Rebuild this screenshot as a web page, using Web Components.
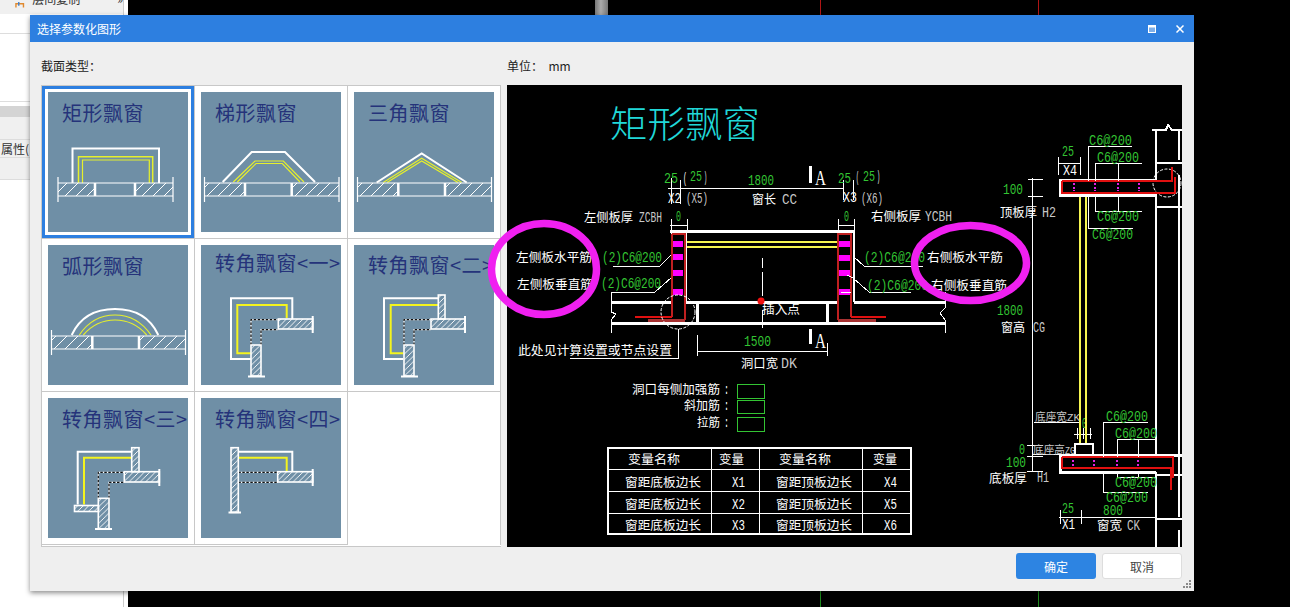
<!DOCTYPE html>
<html lang="zh">
<head>
<meta charset="utf-8">
<title>选择参数化图形</title>
<style>
  html, body { margin: 0; height: 100%; overflow: hidden; background: #000; }
  body { font-family: "Noto Sans CJK SC", "Liberation Sans", sans-serif; font-size: 12px; }
</style>
</head>
<body>
<app-shell></app-shell>
<param-dialog heading="选择参数化图形">
  <type-grid slot="types">
    <section-tile shape="rect" selected>矩形飘窗</section-tile>
    <section-tile shape="trapezoid">梯形飘窗</section-tile>
    <section-tile shape="triangle">三角飘窗</section-tile>
    <section-tile shape="arc">弧形飘窗</section-tile>
    <section-tile shape="corner1" style="--label-top:4px">转角飘窗&lt;一&gt;</section-tile>
    <section-tile shape="corner2" style="--label-top:6px">转角飘窗&lt;二&gt;</section-tile>
    <section-tile shape="corner3">转角飘窗&lt;三&gt;</section-tile>
    <section-tile shape="corner4">转角飘窗&lt;四&gt;</section-tile>
    <section-tile></section-tile>
  </type-grid>
  <cad-drawing slot="preview"></cad-drawing>
</param-dialog>

<script>
class AppShell extends HTMLElement {
  constructor () {
    super()
    this.attachShadow({ mode: 'open' }).innerHTML = /* html */`
      <style>
        :host { display: flex; height: 100vh; color: #333; }
        .side { width: 128px; flex: none; background: #fff; display: flex; flex-direction: column; position: relative; }
        .side::after { content: ''; position: absolute; left: 123px; top: 0; bottom: 0; width: 1px; background: #ccc; }
        .tools { height: 14px; background: #f0f0f0; display: flex; align-items: flex-end; padding: 0 0 6px 15px; gap: 5px; width: 108px; box-sizing: border-box; width: 123px; }
        .tools span { line-height: 18px; white-space: nowrap; }
        .tools b { margin-left: 32px; font-weight: 400; line-height: 18px; }
        .tools svg { margin-bottom: 0; }
        .rule1 { margin-top: 19px; height: 1px; background: #ddd; }
        .rule2 { margin-top: 67px; height: 1px; background: #ddd; }
        .grey { margin-top: 4px; height: 11px; background: #d4d4d4; }
        .props { height: 63px; background: #f0f0f0; padding-top: 22px; border-bottom: 1px solid #ddd; box-sizing: border-box; }
        .props span { display: block; border-top: 1px solid #ddd; border-bottom: 1px solid #ddd; line-height: 17px; padding-left: 1px; }
        .canvas { flex: 1; background: #000; position: relative; }
        .canvas i { position: absolute; width: 1px; }
        .red { top: 0; height: 15px; background: #b01515; }
        .green { top: 591px; height: 16px; background: #1d8a1d; }
        .handle { position: absolute; left: 467px; top: 0; width: 13px; height: 15px; background: linear-gradient(90deg, #777, #aaa 45%, #777); }
      </style>
      <div class="side">
        <div class="tools">
          <svg width="13" height="14" viewBox="0 0 13 14"><path d="M1 14V10H9V14" fill="none" stroke="#e08a30" stroke-width="1.5"/><path d="M4 8V12" stroke="#3a7fd0" stroke-width="1.5"/></svg>
          <span>层间复制</span><b>»</b>
        </div>
        <div class="rule1"></div>
        <div class="rule2"></div>
        <div class="grey"></div>
        <div class="props"><span>属性(</span></div>
      </div>
      <div class="canvas">
        <div class="handle"></div>
        <i class="red" style="left:692px"></i>
        <i class="red" style="left:910px"></i>
        <i class="green" style="left:692px"></i>
        <i class="green" style="left:910px"></i>
      </div>
    `
  }
}

class ParamDialog extends HTMLElement {
  constructor () {
    super()
    this.attachShadow({ mode: 'open' }).innerHTML = /* html */`
      <style>
        :host {
          position: absolute; left: 30px; top: 15px; width: 1164px; height: 576px;
          display: flex; flex-direction: column; background: #efefef; color: #222;
          box-shadow: 0 2px 5px rgba(0, 0, 0, .45);
        }
        header { height: 27px; flex: none; background: #2d7fe0; color: #fff; display: flex; align-items: center; padding: 0 10px 0 7px; }
        header span { flex: 1; }
        header svg { display: block; }
        header svg + svg { margin-left: 20px; }
        .main { flex: 1; display: grid; grid-template-columns: 460px 675px; grid-template-rows: 43px 462px; column-gap: 6px; padding: 0 12px 0 11px; }
        .label { align-self: end; padding-bottom: 11px; line-height: 16px; }
        .label i { font-style: normal; font-family: "Noto Sans CJK TC", sans-serif; }
        footer { height: 44px; flex: none; display: flex; justify-content: flex-end; gap: 6px; padding: 6px 12px 0 0; box-sizing: border-box; }
        button { width: 80px; height: 26px; font: inherit; border-radius: 3px; padding: 0; }
        .ok { background: #2d84e2; color: #fff; border: 0; }
        .cancel { background: #fff; color: #444; border: 1px solid #ddd; }
        .grip { position: absolute; right: 3px; bottom: 3px; }
      </style>
      <header>
        <span></span>
        <svg width="8" height="8" viewBox="0 0 8 8"><rect x=".5" y=".5" width="7" height="7" fill="#7fb0ea" stroke="#fff"/><path d="M0 1.5H8" stroke="#fff" stroke-width="2"/></svg>
        <svg width="8" height="8" viewBox="0 0 8 8"><path d="M.5 .5L7.5 7.5M7.5 .5L.5 7.5" stroke="#fff" stroke-width="1.5"/></svg>
      </header>
      <div class="main">
        <div class="label">截面类型<i>：</i></div>
        <div class="label">单位<i>：</i>&nbsp; mm</div>
        <slot name="types"></slot>
        <slot name="preview"></slot>
      </div>
      <footer>
        <button class="ok">确定</button>
        <button class="cancel">取消</button>
      </footer>
      <svg class="grip" width="8" height="8" viewBox="0 0 8 8" fill="#8a8a8a">
        <rect x="6" y="0" width="2" height="2"/><rect x="3" y="3" width="2" height="2"/><rect x="6" y="3" width="2" height="2"/>
        <rect x="0" y="6" width="2" height="2"/><rect x="3" y="6" width="2" height="2"/><rect x="6" y="6" width="2" height="2"/>
      </svg>
    `
    this.shadowRoot.querySelector('header span').textContent = this.getAttribute('heading')
  }
}

class TypeGrid extends HTMLElement {
  constructor () {
    super()
    this.attachShadow({ mode: 'open' }).innerHTML = /* html */`
      <style>
        :host {
          display: grid; grid-template-columns: repeat(3, 153px); grid-auto-rows: 153px;
          box-sizing: border-box; height: 462px; background: #fff; border: 1px solid #c8c8c8; border-right: 0;
        }
      </style>
      <slot></slot>
    `
  }
}

// thumbnail drawing helpers, coordinates are inside the 140x140 picture
const straightWall = (l, r, ol, or, top = 91, bot = 104) => `
  <rect x="${l}" y="${top}" width="${ol - l}" height="${bot - top}" fill="url(#wide)"/>
  <rect x="${or}" y="${top}" width="${r - or}" height="${bot - top}" fill="url(#wide)"/>
  <path d="M${l} ${top}H${r}M${l} ${bot}H${r}M${l} ${top - 6}V${bot + 6}M${r} ${top - 6}V${bot + 6}" stroke="#fff" stroke-width="1.2" fill="none"/>
  <path d="M${ol} ${top}V${bot}M${or} ${top}V${bot}" stroke="#fff" stroke-width="2.5"/>`
const outline = d => `<path d="${d}" fill="none" stroke="#fff" stroke-width="2"/>`
const yellow = (d, w = 1.2, c = '#e6f02c') => `<path d="${d}" fill="none" stroke="${c}" stroke-width="${w}"/>`
const hatched = (x, y, w, h) => `<rect x="${x}" y="${y}" width="${w}" height="${h}" fill="url(#fine)" stroke="#fff" stroke-width="1.6"/>`
const dashed = d => `<path d="${d}" fill="none" stroke="#fff" stroke-width="1.2"/><path d="${d}" fill="none" stroke="#111" stroke-width="1.2" stroke-dasharray="2.5 1.5"/>`

const SHAPES = {
  rect: outline('M24.5 91V56.5H111V91') + yellow('M30.5 91V64.7H104.7V91', 1.5) + yellow('M34.5 91V68H101.3V91') + straightWall(10, 125, 47, 87),
  trapezoid: outline('M21.7 90L50.7 60H84L114 90') + yellow('M32.3 90L54 69H82.3L103 90') + yellow('M36.3 90L55 71.5H81.3L99 90') + straightWall(3.5, 138, 44, 90.7),
  triangle: outline('M22.7 90.5L67.7 61.5L112.7 90.5') + yellow('M29.3 90.5L67.7 66.3L107.7 90.5') + yellow('M33 90.5L67.7 69L104 90.5') + straightWall(3.5, 137.5, 44.3, 91),
  arc: outline('M23.7 90C32 72 48 64 67 64S102 72 110.3 90') + yellow('M31.3 90C40 77 52 70 67 70S94 77 103 90') + yellow('M35.3 90C43 81 54 75 67 75S91 81 98.7 90') + straightWall(3.5, 137.5, 44.3, 91),
  corner1: outline('M49.7 114H30V53.3H91.3V74') + yellow('M85.7 73V60H36.3V108.3H49.7', 2, '#f4f41e') +
    dashed('M50 100V74.7H77.3') + dashed('M60 100V84.7H77.3') + hatched(77.3, 74, 34.4, 10) + hatched(50, 100, 10, 31) +
    outline('M111.7 71V88') + outline('M47 131.5H64'),
  corner2: outline('M49.3 114H30V53.3H84.3') + yellow('M84.3 60H36.7V108.3H49.3', 2, '#f4f41e') +
    dashed('M50 100V74.7H77') + dashed('M60 100V84.7H77') + hatched(84.3, 50, 6.7, 24) + hatched(77, 74, 34, 10) + hatched(50, 100, 10, 31) +
    outline('M111 71V88') + outline('M47 131.5H64'),
  corner3: outline('M29.7 106.5V53.7H83.7') + yellow('M83.7 59.7H36V106.5', 2, '#f4f41e') +
    dashed('M50.3 100.3V74.3H76.3') + dashed('M61 100.3V84.3H76.3') + hatched(83.7, 49.7, 7.3, 24) + hatched(76.3, 73.7, 35, 10.3) +
    hatched(26.5, 107.5, 24, 6) + hatched(50.3, 100.3, 10.7, 30.7) + outline('M111.3 71V88') + outline('M47 131H64'),
  corner4: outline('M37.3 53.7H91.3V73.7') + yellow('M37.3 59.7H85.7V73', 2, '#f4f41e') +
    dashed('M37.3 74.3H76.7') + dashed('M37.3 84.3H76.7') + hatched(30, 49.7, 7.3, 64.6) + hatched(76.7, 73.7, 35, 10.3) +
    outline('M111.7 71V88') + outline('M27.5 114.5H40')
}

class SectionTile extends HTMLElement {
  constructor () {
    super()
    const shape = SHAPES[this.getAttribute('shape')]
    this.attachShadow({ mode: 'open' }).innerHTML = /* html */`
      <style>
        :host {
          display: block; box-sizing: border-box; padding: 6px; border-right: 1px solid #c8c8c8; border-bottom: 1px solid #c8c8c8;
          background: #fff; font-family: "Noto Sans CJK SC", "Liberation Sans", sans-serif;
        }
        :host([selected]) { box-shadow: inset 0 0 0 3px #2d7fe0; }
        :host(:not([shape])) { border-bottom: 0; }
        .thumb { width: 140px; height: 140px; background: #6f8fa6; position: relative; overflow: hidden; }
        .label {
          padding: var(--label-top, 7px) 0 0 14px; font-size: 20px; font-weight: 400; line-height: 28px;
          letter-spacing: .5px; color: #25337a; white-space: nowrap;
        }
        svg { position: absolute; left: 0; top: 0; }
      </style>
      ${shape ? `
      <div class="thumb">
        <div class="label"><slot></slot></div>
        <svg width="140" height="140" viewBox="0 0 140 140">
          <defs>
            <pattern id="wide" patternUnits="userSpaceOnUse" width="11" height="11"><path d="M0 11L11 0" stroke="#fff" stroke-width="1"/></pattern>
            <pattern id="fine" patternUnits="userSpaceOnUse" width="5.5" height="5.5"><path d="M0 5.5L5.5 0" stroke="#fff" stroke-width=".9"/></pattern>
          </defs>
          ${shape}
        </svg>
      </div>` : ''}
    `
  }
}

// cad text: x1..x2 is the width the string has in the drawing
const T = (x1, x2, y, s, c = 'w', size) => {
  const cjk = /[\u4e00-\u9fff]/.test(s)
  const fs = size || (cjk ? 12.5 : 14)
  return `<text x="${x1}" y="${y}" textLength="${x2 - x1}" lengthAdjust="spacingAndGlyphs" font-size="${fs}" class="${c} ${cjk ? 'cjk' : 'lat'}">${s}</text>`
}
const P = (d, c = 't') => `<path class="${c}" d="${d}"/>`

class CadDrawing extends HTMLElement {
  constructor () {
    super()
    this.attachShadow({ mode: 'open' }).innerHTML = /* html */`
      <style>
        :host { display: block; background: #000; width: 675px; height: 462px; position: relative; }
        svg { display: block; overflow: visible; }
        path, rect, circle { fill: none; }
        .t { stroke: #fff; stroke-width: 1; shape-rendering: crispEdges; }
        .m { stroke: #fff; stroke-width: 2; shape-rendering: crispEdges; }
        .k { stroke: #fff; stroke-width: 3; shape-rendering: crispEdges; }
        .c { stroke: #fff; stroke-width: 1; stroke-dasharray: 3 1.5; }
        .r { stroke: #e01010; stroke-width: 2; shape-rendering: crispEdges; }
        .d { stroke: #c02020; stroke-width: 2; shape-rendering: crispEdges; }
        .o { stroke: #a83232; stroke-width: 3; shape-rendering: crispEdges; }
        .y { stroke: #f6f650; stroke-width: 2; shape-rendering: crispEdges; }
        .p { stroke: #ff00ff; stroke-width: 6; shape-rendering: crispEdges; }
        .q { stroke: #e020e0; stroke-width: 1.5; stroke-dasharray: 2 1.5; shape-rendering: crispEdges; }
        .b { stroke: #33c433; stroke-width: 1; shape-rendering: crispEdges; }
        .e { stroke: #f020f0; stroke-width: 7.5; }
        text { white-space: pre; }
        .cjk { font-family: "Noto Sans CJK SC", sans-serif; font-weight: 400; }
        .lat { font-family: "Liberation Mono", monospace; }
        .serif { font-family: "Liberation Serif", serif; }
        .w { fill: #fff; }
        .s { fill: #c8c8c8; }
        .g { fill: #33c433; }
        .h { fill: #20d8d8; font-weight: 300; }
      </style>
      <svg width="675" height="462" viewBox="507 85 675 462">
        ${T(610, 760, 138, '矩形飘窗', 'h', 37)}

        <!-- front view: dimensions -->
        ${P('M668 188H843M671 178V204M680 180V204M843 180V200M853 180V200')}
        ${P('M670 225H688M671 219V231M687 219V231M838 225H855M838 219V231M854 219V231')}
        ${T(664, 678, 183, '25', 'g')}${T(683, 687, 183, '(', 'w')}${T(690, 702, 181, '25', 'g')}${T(704, 707, 182, ')', 'w')}
        ${T(748, 774, 185, '1800', 'g')}
        ${T(668, 681, 203, 'X2')}${T(686, 708, 203, '(X5)', 's')}
        ${T(752, 776, 204, '窗长')}${T(782, 797, 204, 'CC', 's')}
        ${T(584, 633, 222, '左侧板厚')}${T(639, 662, 222, 'ZCBH', 's')}
        ${T(676, 681, 221, '0', 'g')}
        ${T(838, 851, 183, '25', 'g')}${T(856, 859, 182, '(', 'w')}${T(863, 875, 181, '25', 'g')}${T(877, 880, 181, ')', 'w')}
        ${T(843, 857, 202, 'X3')}${T(861, 883, 203, '(X6)', 's')}
        ${T(844, 849, 221, '0', 'g')}
        ${T(871, 921, 221, '右侧板厚')}${T(925, 952, 221, 'YCBH', 's')}

        <!-- section marks -->
        <rect x="809" y="166" width="3" height="17" style="fill:#fff"/>
        <rect x="809" y="329" width="3" height="15" style="fill:#fff"/>
        <text x="815" y="185" class="w serif" font-size="21" textLength="11" lengthAdjust="spacingAndGlyphs">A</text>
        <text x="815" y="348" class="w serif" font-size="21" textLength="11" lengthAdjust="spacingAndGlyphs">A</text>

        <!-- front view: window and wall -->
        ${P('M670 231H855', 'k')}
        ${P('M686 242H838M686 247H838', 'y')}
        ${P('M671 231V302')}${P('M686 231V302M854 231V302', 'm')}
        ${P('M611 302H672M686 302H838M854 302H945M611 323H945', 'k')}
        ${P('M697 302V323M827 302V323', 'k')}
        ${P('M611 292V312L616 314L611 320V333M945 292V308L940 313L945 320V333')}
        ${P('M673 244H683M673 257H683M673 273H683M673 292H683', 'p')}
        ${P('M839 244H850M839 258H850M839 273H850M839 292H850', 'p')}
        ${P('M648 320H685M838 320H876', 'o')}
        ${P('M672 234H685V320M672 317V234', 'd')}${P('M635 317H672', 'r')}
        ${P('M851 317V234H838V320', 'd')}${P('M851 317H886', 'r')}
        ${P('M762 258V268M762 272V296M762 310V328')}
        <circle cx="678" cy="312" r="17" class="c"/>
        <circle cx="761" cy="301" r="3.5" style="fill:#f01010"/>
        ${P('M678 329V358H570')}
        ${T(518, 672, 355, '此处见计算设置或节点设置', 'w', 12.5)}
        ${T(762, 800, 314, '插入点')}
        ${T(744, 771, 346, '1500', 'g')}
        ${P('M697 351H827M697 335V356M827 343V356')}
        ${T(741, 778, 368, '洞口宽')}${T(781, 797, 368, 'DK', 's')}

        <!-- front view: leaders -->
        ${P('M613 266H660L671 255M611 292H655L671 278')}
        ${P('M854 257L864 266H923M847 275L853 278L869 292H911M841 292H851')}
        ${T(516, 592, 262, '左侧板水平筋')}${T(517, 593, 289, '左侧板垂直筋')}
        ${T(602, 662, 262, '(2)C6@200', 'g')}${T(601, 661, 288, '(2)C6@200', 'g')}
        ${T(864, 925, 262, '(2)C6@200', 'g')}${T(867, 928, 290, '(2)C6@200', 'g')}
        ${T(927, 1003, 262, '右侧板水平筋')}${T(931, 1007, 290, '右侧板垂直筋')}

        <!-- bar notes -->
        ${T(632, 720, 394, '洞口每侧加强筋')}${T(724, 729, 394, ':')}
        ${T(684, 720, 410, '斜加筋')}${T(724, 729, 410, ':')}
        ${T(697, 720, 427, '拉筋')}${T(724, 729, 427, ':')}
        ${P('M737 384H764V398H737ZM737 400H764V413H737ZM737 417H764V431H737Z', 'b')}

        <!-- variable table -->
        ${P('M608 448H911V534H608Z', 'm')}
        ${P('M711 448V534M759 448V534M862 448V534M608 469H911M608 491H911M608 513H911')}
        ${T(628, 680, 464, '变量名称')}${T(719, 744, 464, '变量')}${T(779, 831, 464, '变量名称')}${T(873, 897, 464, '变量')}
        ${T(625, 701, 487, '窗距底板边长')}${T(732, 745, 487, 'X1')}${T(776, 852, 487, '窗距顶板边长')}${T(884, 897, 487, 'X4')}
        ${T(625, 701, 509, '窗距底板边长')}${T(732, 745, 509, 'X2')}${T(776, 852, 509, '窗距顶板边长')}${T(884, 897, 509, 'X5')}
        ${T(625, 701, 530, '窗距底板边长')}${T(732, 745, 530, 'X3')}${T(776, 852, 530, '窗距顶板边长')}${T(884, 897, 530, 'X6')}

        <!-- section view: dimensions -->
        ${P('M1032 178V472M1028 179H1043M1028 196H1043M1027 445H1043M1027 456H1043M1027 471H1043')}
        ${P('M1058 163H1081M1058 157V175M1080 157V175M1059 517H1155M1060 510V524M1081 510V524')}
        ${P('M1074 434H1092M1077 428V439M1083 428V439M1090 428V439M1034 422H1080M1033 454H1062')}
        ${T(1003, 1023, 194, '100', 'g')}${T(1000, 1037, 217, '顶板厚')}${T(1042, 1056, 217, 'H2', 's')}
        ${T(1062, 1074, 156, '25', 'g')}${T(1063, 1077, 175, 'X4')}
        ${T(997, 1023, 315, '1800', 'g')}${T(1001, 1025, 332, '窗高')}${T(1033, 1045, 332, 'CG', 's')}
        ${T(1035, 1067, 421, '底座宽', 's', 11)}${T(1067, 1080, 421, 'ZK', 's', 11)}${T(1082, 1087, 428, '0', 'g')}
        ${T(1033, 1065, 454, '底座高', 's', 11)}${T(1065, 1075, 454, 'ZG', 's', 11)}
        ${T(1019, 1025, 454, '0', 'g')}${T(1006, 1026, 467, '100', 'g')}
        ${T(989, 1027, 483, '底板厚')}${T(1037, 1049, 482, 'H1', 's')}
        ${T(1062, 1074, 513, '25', 'g')}${T(1103, 1123, 515, '800', 'g')}
        ${T(1062, 1075, 529, 'X1')}${T(1097, 1122, 530, '窗宽')}${T(1127, 1140, 530, 'CK', 's')}

        <!-- section view: walls and slabs -->
        ${P('M1080 196V443M1086 196V443', 'y')}
        ${P('M1156 130V180M1156 195V455M1156 472V547M1156 163H1182M1156 207H1182M1152 130H1166L1168 125L1172 130H1182M1179 130V160M1179 175V207', 'm')}
        ${P('M1179 207V517M1179 530V547M1156 519H1182M1156 475H1182', 'm')}
        ${P('M1157 195H1060V180H1157', 'k')}
        ${P('M1060 455V472H1156M1060 455H1182', 'k')}
        ${P('M1075 455V444H1093V455', 'm')}
        <circle cx="1167" cy="183" r="14" class="c"/>
        ${P('M1062 181H1172V167M1062 181V193H1175V177', 'r')}
        ${P('M1062 457H1173V478M1062 457V468H1171V490', 'r')}
        ${P('M1074 183V191M1095 183V191M1118 183V191M1139 183V191M1073 460V467M1094 460V467M1117 460V467M1138 460V467', 'q')}

        <!-- section view: leaders -->
        ${P('M1132 146H1088V181M1088 195V228H1133M1142 163H1095V181M1118 163V181M1095 195V211H1142M1118 195V211')}
        ${P('M1148 422H1103V457M1103 472V492H1148M1157 439H1117V457M1138 439V457M1117 472V477H1157M1138 472V477')}
        ${T(1089, 1132, 145, 'C6@200', 'g')}${T(1097, 1139, 162, 'C6@200', 'g')}
        ${T(1097, 1139, 221, 'C6@200', 'g')}${T(1092, 1133, 239, 'C6@200', 'g')}
        ${T(1106, 1148, 421, 'C6@200', 'g')}${T(1115, 1157, 438, 'C6@200', 'g')}
        ${T(1115, 1157, 487, 'C6@200', 'g')}${T(1106, 1148, 502, 'C6@200', 'g')}

        <!-- marks drawn over the screenshot -->
        <ellipse cx="544" cy="269" rx="52.5" ry="45.5" class="e" style="fill:none"/>
        <ellipse cx="970.5" cy="263" rx="56" ry="37.5" class="e" style="fill:none"/>
      </svg>
    `
  }
}

customElements.define('app-shell', AppShell)
customElements.define('param-dialog', ParamDialog)
customElements.define('type-grid', TypeGrid)
customElements.define('section-tile', SectionTile)
customElements.define('cad-drawing', CadDrawing)
</script>
</body>
</html>
